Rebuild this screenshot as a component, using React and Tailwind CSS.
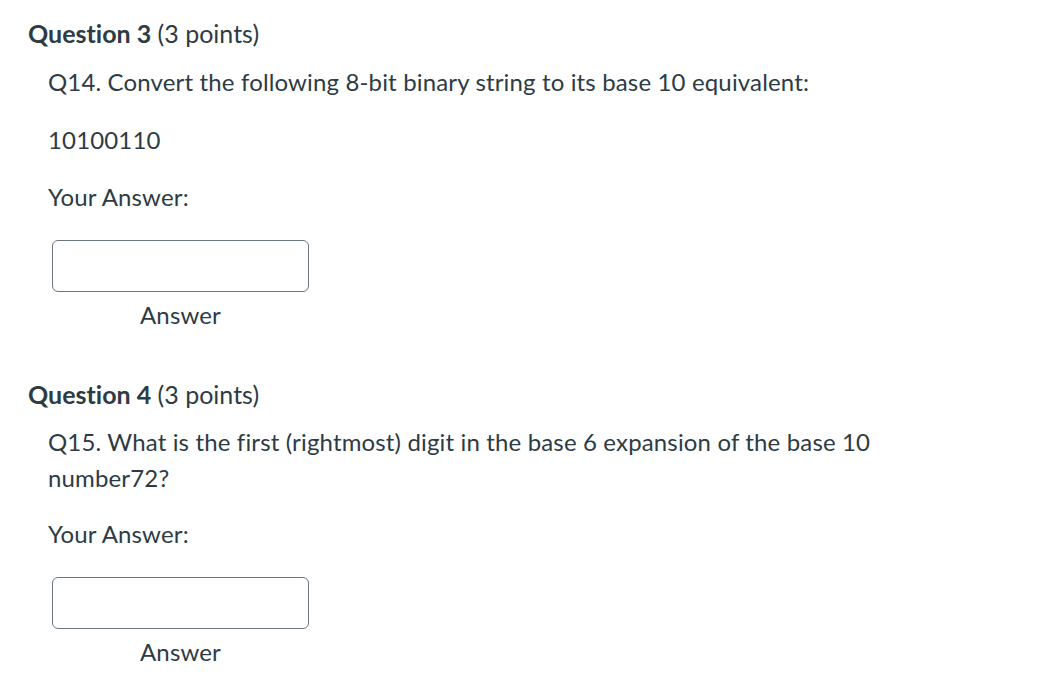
export default function App() {
  const questions = [
    {
      num: 3,
      points: 3,
      prompt: "Q14. Convert the following 8-bit binary string to its base 10 equivalent:",
      extra: "10100110",
    },
    {
      num: 4,
      points: 3,
      prompt: "Q15. What is the first (rightmost) digit in the base 6 expansion of the base 10 number72?",
    },
  ];

  return (
    <div className="min-h-screen bg-white text-[#2d3b45] font-['Lato','Liberation_Sans',sans-serif] [font-variant-ligatures:none] pt-[15px] pl-7">
      {questions.map((q, i) => (
        <section key={q.num} className={i > 0 ? "mt-[43px]" : ""}>
          <h2 className="text-[25px] leading-[36px] text-[#2d3b45]">
            <span className="font-bold">Question {q.num}</span> ({q.points} points)
          </h2>
          <div className="pl-5 text-[24px] leading-[36px] tracking-[0.15px]">
            <p className={`max-w-[860px] ${q.extra ? "mt-[13px]" : "mt-3"}`}>
              {q.prompt}
            </p>
            {q.extra && <p className="mt-[22px]">{q.extra}</p>}
            <p className={q.extra ? "mt-[21px]" : "mt-5"}>Your Answer:</p>
            <label className="mt-[25px] ml-1 flex w-[257px] flex-col items-center">
              <input
                type="text"
                className="h-[52px] w-full rounded-md border border-[#6b7780] bg-white px-3 text-[21px] outline-none"
              />
              <span className="mt-[5px]">Answer</span>
            </label>
          </div>
        </section>
      ))}
    </div>
  );
}
